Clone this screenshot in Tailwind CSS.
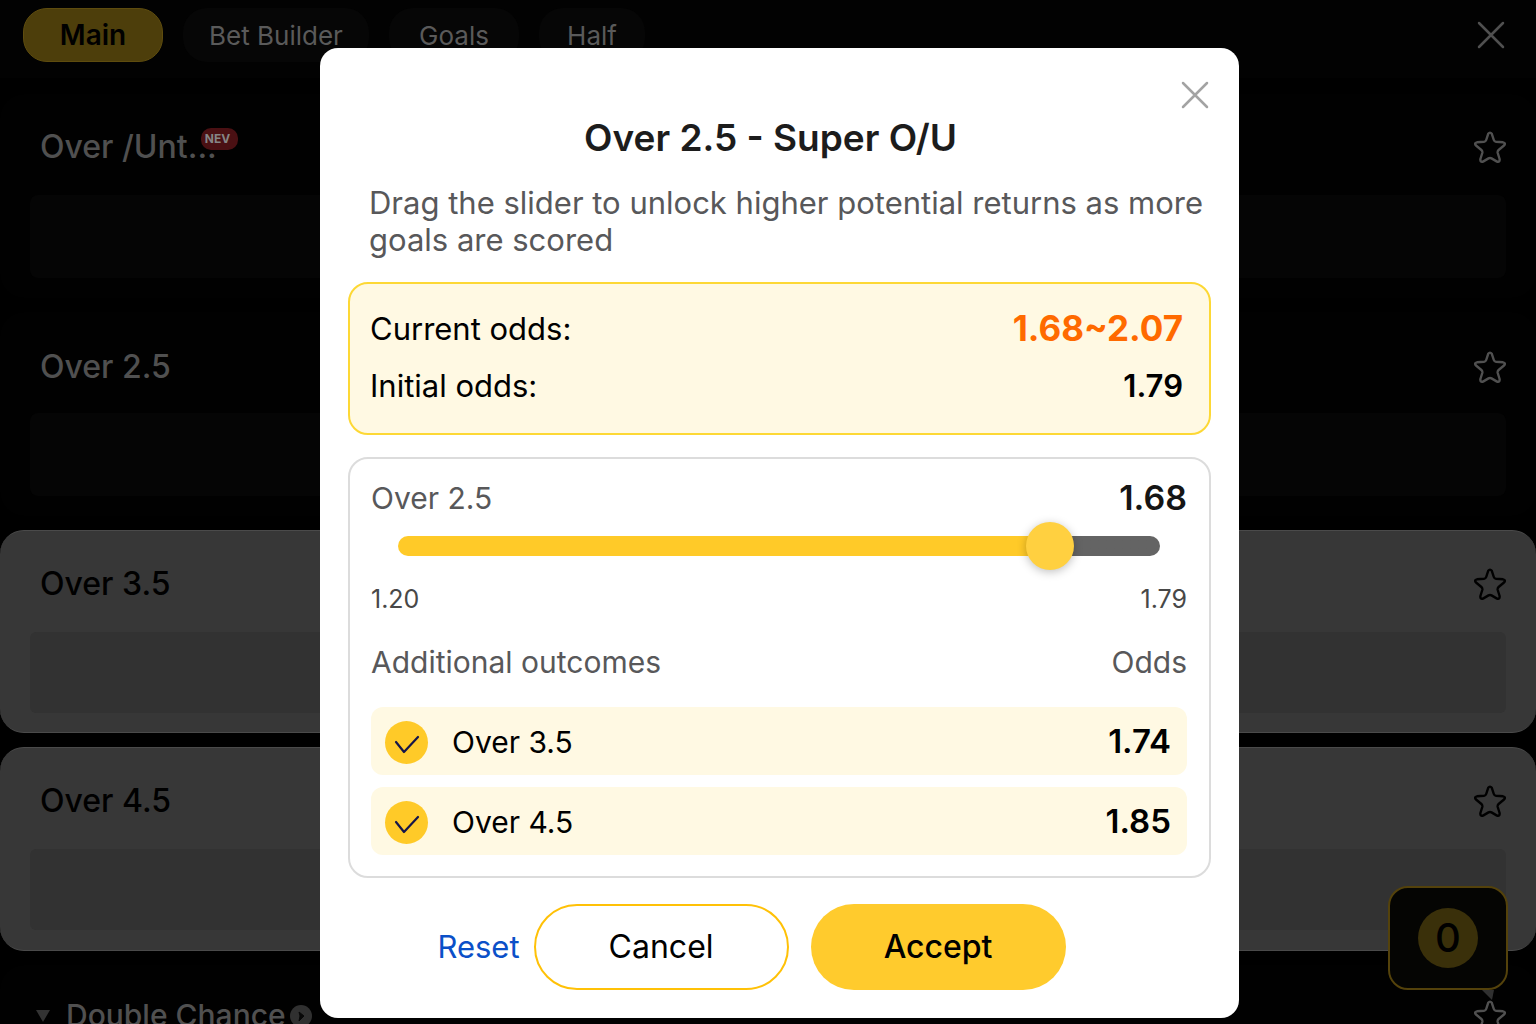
<!DOCTYPE html>
<html lang="en">

<head>
    <meta charset="UTF-8" />
    <meta name="viewport" content="width=device-width, initial-scale=1.0">
    <title>Super O/U</title>
    <script src="https://cdn.jsdelivr.net/npm/@tailwindcss/browser@4"></script>
</head>

<body class="h-screen overflow-hidden bg-black font-['Inter',sans-serif]">

    <svg class="hidden">
        <symbol id="star" viewBox="0 0 32 32">
            <path d="M14.2 2.8Q16 .5 17.8 2.8L19.8 9Q20.3 10.6 22 10.8L29 11.3Q32.2 12 30 14.5L24.6 19Q23.3 20.2 23.7 22L25.6 28Q26 31.5 23 30.6L17.5 27.4Q16 26.6 14.5 27.4L9 30.6Q6 31.5 6.4 28L8.3 22Q8.7 20.2 7.4 19L2 14.5Q-.2 12 3 11.3L10 10.8Q11.7 10.6 12.2 9Z" fill="none" stroke="currentColor" stroke-width="2.4" stroke-linejoin="round" />
        </symbol>
    </svg>

    <!-- Market tabs -->
    <header class="flex h-[78px] items-start justify-between bg-[#020202] pl-[23px] pr-[31px] pt-2 text-[#5a5a5a]">
        <nav class="flex gap-5 text-[26px]">
            <button class="h-[54px] w-[140px] rounded-3xl border border-[#5e4c0e] bg-[#4d3e0b] text-[28px] font-semibold text-black">Main</button>
            <button class="h-[54px] w-[186px] rounded-3xl bg-[#060606]">Bet Builder</button>
            <button class="h-[54px] w-[130px] rounded-3xl bg-[#060606]">Goals</button>
            <button class="h-[54px] w-[106px] rounded-3xl bg-[#060606]">Half</button>
        </nav>
        <button class="mt-[13px]" aria-label="Close markets">
            <svg class="h-7 w-7" viewBox="0 0 28 28" fill="none" stroke="#505050" stroke-width="2.5" stroke-linecap="round">
                <path d="M2 2l24 24M26 2L2 26" />
            </svg>
        </button>
    </header>

    <!-- Market list -->
    <main class="flex flex-col gap-3.5 pt-4">
        <section class="h-[204px] shrink-0 rounded-3xl bg-[#010101] px-[30px] text-[#505050]">
            <div class="flex h-[101px] items-center justify-between pl-2.5 pt-1">
                <h2 class="flex items-center text-[32px] font-medium">Over /Unt...
                    <span class="-ml-4 mb-4 rounded-[10px] bg-[#4a1013] pl-1 pr-2 text-[12px] font-bold leading-[22px] text-[#858585]">NEV</span>
                </h2>
                <button aria-label="Favourite Over/Under"><svg class="h-8 w-8"><use href="#star" /></svg></button>
            </div>
            <div class="h-[83px] rounded-lg bg-[#050505]"></div>
        </section>

        <section class="h-[204px] shrink-0 rounded-3xl bg-[#010101] px-[30px] text-[#505050]">
            <div class="flex h-[101px] items-center justify-between pl-2.5 pt-2">
                <h2 class="text-[32px] font-medium">Over 2.5</h2>
                <button aria-label="Favourite Over 2.5"><svg class="h-8 w-8"><use href="#star" /></svg></button>
            </div>
            <div class="h-[83px] rounded-lg bg-[#050505]"></div>
        </section>

        <section class="h-[203px] shrink-0 rounded-3xl border-y border-[#4a4a4a] bg-[#373737] px-[30px] text-black">
            <div class="flex h-[101px] items-center justify-between pl-2.5 pt-1">
                <h2 class="text-[32px] font-medium">Over 3.5</h2>
                <button aria-label="Favourite Over 3.5"><svg class="h-8 w-8"><use href="#star" /></svg></button>
            </div>
            <div class="h-[81px] rounded-md bg-[#323232]"></div>
        </section>

        <section class="h-[204px] shrink-0 rounded-3xl border-y border-[#4a4a4a] bg-[#373737] px-[30px] text-black">
            <div class="flex h-[101px] items-center justify-between pl-2.5 pt-1">
                <h2 class="text-[32px] font-medium">Over 4.5</h2>
                <button aria-label="Favourite Over 4.5"><svg class="h-8 w-8"><use href="#star" /></svg></button>
            </div>
            <div class="h-[81px] rounded-md bg-[#323232]"></div>
        </section>

        <section class="h-[204px] shrink-0 rounded-3xl bg-[#010101] px-[30px] text-[#505050]">
            <div class="flex h-[101px] items-center justify-between pl-1.5">
                <div class="flex items-center gap-1">
                    <svg class="mr-3 h-3 w-3.5" viewBox="0 0 14 12"><path d="M0 0h14L7 12z" fill="#333" /></svg>
                    <h2 class="text-[30px] font-medium">Double Chance</h2>
                    <svg class="h-[22px] w-[22px]" viewBox="0 0 22 22">
                        <circle cx="11" cy="11" r="11" fill="#303030" />
                        <path d="M9 7l5 4-5 5 1-5z" fill="#080808" stroke="#080808" stroke-linejoin="round" />
                    </svg>
                </div>
                <button aria-label="Favourite Double Chance"><svg class="h-8 w-8"><use href="#star" /></svg></button>
            </div>
        </section>
    </main>

    <!-- Betslip counter -->
    <button class="fixed bottom-[34px] right-7 flex h-[104px] w-[120px] items-center justify-center rounded-[20px] border-2 border-[#54420b] bg-[#050503]">
        <span class="flex h-[60px] w-[60px] items-center justify-center rounded-full bg-[#3a300a] text-[40px] font-medium text-black">0</span>
        <svg class="absolute right-3 top-[102px] h-2.5 w-3" viewBox="0 0 12 10"><path d="M0 0h12L10 10z" fill="#303030" /></svg>
    </button>

    <!-- Odds dialog -->
    <div class="fixed inset-0 flex items-start justify-center pl-[23px] pt-12">
        <div role="dialog" aria-labelledby="dialog-title" class="relative w-full max-w-[919px] rounded-[18px] bg-white px-7 pb-7 pt-[66px]">
            <button class="absolute right-[30px] top-[33px]" aria-label="Close">
                <svg class="h-7 w-7" viewBox="0 0 28 28" fill="none" stroke="#a3a3a3" stroke-width="2.5" stroke-linecap="round">
                    <path d="M2 2l24 24M26 2L2 26" />
                </svg>
            </button>

            <h1 id="dialog-title" class="pr-[18px] text-center text-[37px] font-semibold leading-[48px] text-[#1c1c1c]">Over 2.5 - Super O/U</h1>
            <p class="mt-[22px] pl-[21px] text-[31px] leading-[37px] text-[#58585a]">Drag the slider to unlock higher potential returns as more goals are scored</p>

            <dl class="mt-6 rounded-[20px] border-2 border-[#fdd835] bg-[#fff9e3] px-5 pb-[19px] pt-4 text-[31px] leading-[57px]">
                <div class="flex justify-between pr-[6px]">
                    <dt>Current odds:</dt>
                    <dd class="text-[35px] font-bold text-[#ff6a00]">1.68~2.07</dd>
                </div>
                <div class="flex justify-between pr-[6px]">
                    <dt>Initial odds:</dt>
                    <dd class="font-semibold">1.79</dd>
                </div>
            </dl>

            <div class="mt-[22px] rounded-[20px] border-2 border-[#dcdcdc] pb-[21px] pl-[21px] pr-[22px] pt-[15px]">
                <div class="flex items-center justify-between text-[30px] leading-[48px] text-[#58585a]">
                    <label for="odds">Over 2.5</label>
                    <output for="odds" id="odds-value" class="text-[34px] font-semibold text-[#151515]">1.68</output>
                </div>
                <input id="odds" type="range" min="0" max="100" value="88"
                    class="mx-auto block h-12 w-[calc(100%-54px)] appearance-none bg-transparent [&::-webkit-slider-runnable-track]:h-5 [&::-webkit-slider-runnable-track]:rounded-full [&::-webkit-slider-runnable-track]:bg-linear-to-r [&::-webkit-slider-runnable-track]:from-[#ffca28] [&::-webkit-slider-runnable-track]:from-86% [&::-webkit-slider-runnable-track]:to-[#646464] [&::-webkit-slider-runnable-track]:to-86% [&::-webkit-slider-thumb]:-mt-3.5 [&::-webkit-slider-thumb]:h-12 [&::-webkit-slider-thumb]:w-12 [&::-webkit-slider-thumb]:appearance-none [&::-webkit-slider-thumb]:rounded-full [&::-webkit-slider-thumb]:bg-[#ffd040] [&::-webkit-slider-thumb]:shadow-[0_2px_10px_rgba(0,0,0,0.25)]" />
                <div class="mt-[9px] flex justify-between text-[25px] leading-[40px] text-[#484848]">
                    <span>1.20</span>
                    <span>1.79</span>
                </div>

                <div class="mt-[19px] flex justify-between text-[30px] leading-[48px] text-[#58585a]">
                    <span>Additional outcomes</span>
                    <span>Odds</span>
                </div>

                <div class="mt-[21px] flex flex-col gap-3 text-[30px]">
                    <label class="flex h-[68px] items-center rounded-xl bg-[#fff9e3] pl-3.5 pr-4 pt-0.5">
                        <span class="grid">
                            <input type="checkbox" checked class="col-start-1 row-start-1 h-[43px] w-[43px] appearance-none rounded-full bg-[#ffca28]" />
                            <svg class="pointer-events-none col-start-1 row-start-1 h-[43px] w-[43px]" viewBox="0 0 43 43" fill="none" stroke="#15154a" stroke-width="2.2" stroke-linecap="round" stroke-linejoin="round"><path d="M11 21l8 10 14-15" /></svg>
                        </span>
                        <span class="ml-6 flex-1">Over 3.5</span>
                        <span class="text-[33px] font-semibold">1.74</span>
                    </label>
                    <label class="flex h-[68px] items-center rounded-xl bg-[#fff9e3] pl-3.5 pr-4 pt-0.5">
                        <span class="grid">
                            <input type="checkbox" checked class="col-start-1 row-start-1 h-[43px] w-[43px] appearance-none rounded-full bg-[#ffca28]" />
                            <svg class="pointer-events-none col-start-1 row-start-1 h-[43px] w-[43px]" viewBox="0 0 43 43" fill="none" stroke="#15154a" stroke-width="2.2" stroke-linecap="round" stroke-linejoin="round"><path d="M11 21l8 10 14-15" /></svg>
                        </span>
                        <span class="ml-6 flex-1">Over 4.5</span>
                        <span class="text-[33px] font-semibold">1.85</span>
                    </label>
                </div>
            </div>

            <div class="mt-[26px] flex items-center justify-center pr-14 text-[32px]">
                <button class="mr-3.5 text-[31px] text-[#0b50c8]">Reset</button>
                <button class="mr-[22px] h-[86px] w-[255px] rounded-[43px] border-2 border-[#ffc107]">Cancel</button>
                <button class="h-[86px] w-[255px] rounded-[43px] bg-[#ffcb2d] font-medium">Accept</button>
            </div>
        </div>
    </div>
</body>

</html>
